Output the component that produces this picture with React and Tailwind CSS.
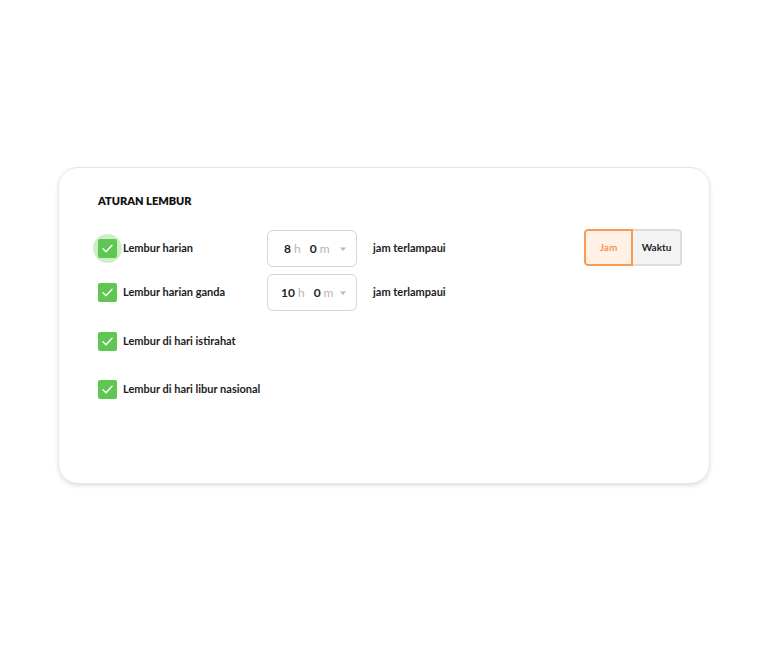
import React, { useState } from 'react';

const font = { fontFamily: 'Lato, "Open Sans", sans-serif' };

function Check({ halo }) {
    return (
        <div className="relative w-[19px] h-[19px] shrink-0">
            {halo && <div className="absolute -left-[5px] -top-[5px] w-[29px] h-[29px] rounded-full bg-[#cdeec6]" />}
            <div className="relative w-[19px] h-[19px] rounded-[2px] bg-[#5fc751] flex items-center justify-center">
                <svg width="13" height="13" viewBox="0 0 13 13" fill="none">
                    <path d="M2 6.8 L5 9.8 L11 3.2" stroke="white" strokeWidth="1.4" strokeLinecap="round" strokeLinejoin="round" />
                </svg>
            </div>
        </div>
    );
}

function Duration({ h }) {
    return (
        <div className="w-[90px] h-[37px] border border-[#d6d6d6] rounded-[6px] flex items-center pl-[13px] pr-[9px] bg-white">
            <div className={`flex items-baseline ${h.length > 1 ? '' : 'pl-[3px]'}`}>
                <span className="text-[12px] font-bold text-[#1f1f1f]">{h}</span>
                <span className="text-[12px] text-[#b5b5b5] ml-[3px]">h</span>
                <span className="text-[12px] font-bold text-[#1f1f1f] ml-[9px]">0</span>
                <span className="text-[12px] text-[#b5b5b5] ml-[3px]">m</span>
            </div>
            <svg className="ml-auto" width="8" height="6" viewBox="0 0 8 6">
                <path d="M1 1.5 L7 1.5 L4 5 Z" fill="#b8b8b8" />
            </svg>
        </div>
    );
}

function Row({ label, h, halo, right }) {
    return (
        <div className="flex items-center h-[37px]">
            <Check halo={halo} />
            <span className="ml-[6px] w-[144px] text-[11px] font-bold text-[#1c1c1c]">{label}</span>
            {h && (
                <>
                    <Duration h={h} />
                    <span className="ml-[16px] text-[11px] font-bold text-[#1c1c1c]">jam terlampaui</span>
                </>
            )}
            {right}
        </div>
    );
}

export default function App() {
    const [mode, setMode] = useState('jam');
    const toggle = (
        <div className="ml-auto -mt-[3px] flex h-[37px] rounded-[4px] overflow-hidden">
            <button
                onClick={() => setMode('jam')}
                className={`w-[49px] h-full text-[10px] font-semibold rounded-l-[4px] border-2 ${mode === 'jam' ? 'border-[#f99a55] bg-[#fff1e6] text-[#f48a3e]' : 'border-[#dcdcdc] bg-[#f3f3f3] text-[#222]'}`}
            >
                Jam
            </button>
            <button
                onClick={() => setMode('waktu')}
                className={`w-[49px] h-full text-[10px] font-bold rounded-r-[4px] border-2 border-l-0 ${mode === 'waktu' ? 'border-[#f99a55] bg-[#fff1e6] text-[#f48a3e]' : 'border-[#dcdcdc] bg-[#f3f3f3] text-[#222]'}`}
            >
                Waktu
            </button>
        </div>
    );

    return (
        <div className="w-[768px] h-[653px] bg-white pt-[167px] pl-[58px]" style={font}>
            <div className="w-[652px] h-[317px] rounded-[20px] border border-[#e6e6e6] bg-white shadow-[0_2px_4px_rgba(0,0,0,0.12)] pl-[39px] pr-[27px] pt-[26px]">
                <h2 className="text-[11px] font-extrabold text-[#111] leading-[14px]">ATURAN LEMBUR</h2>
                <div className="mt-[22px] flex flex-col">
                    <Row label="Lembur harian" h="8" halo right={toggle} />
                    <div className="mt-[7px]">
                        <Row label="Lembur harian ganda" h="10" />
                    </div>
                    <div className="mt-[12px]">
                        <Row label="Lembur di hari istirahat" />
                    </div>
                    <div className="mt-[11px]">
                        <Row label="Lembur di hari libur nasional" />
                    </div>
                </div>
            </div>
        </div>
    );
}
